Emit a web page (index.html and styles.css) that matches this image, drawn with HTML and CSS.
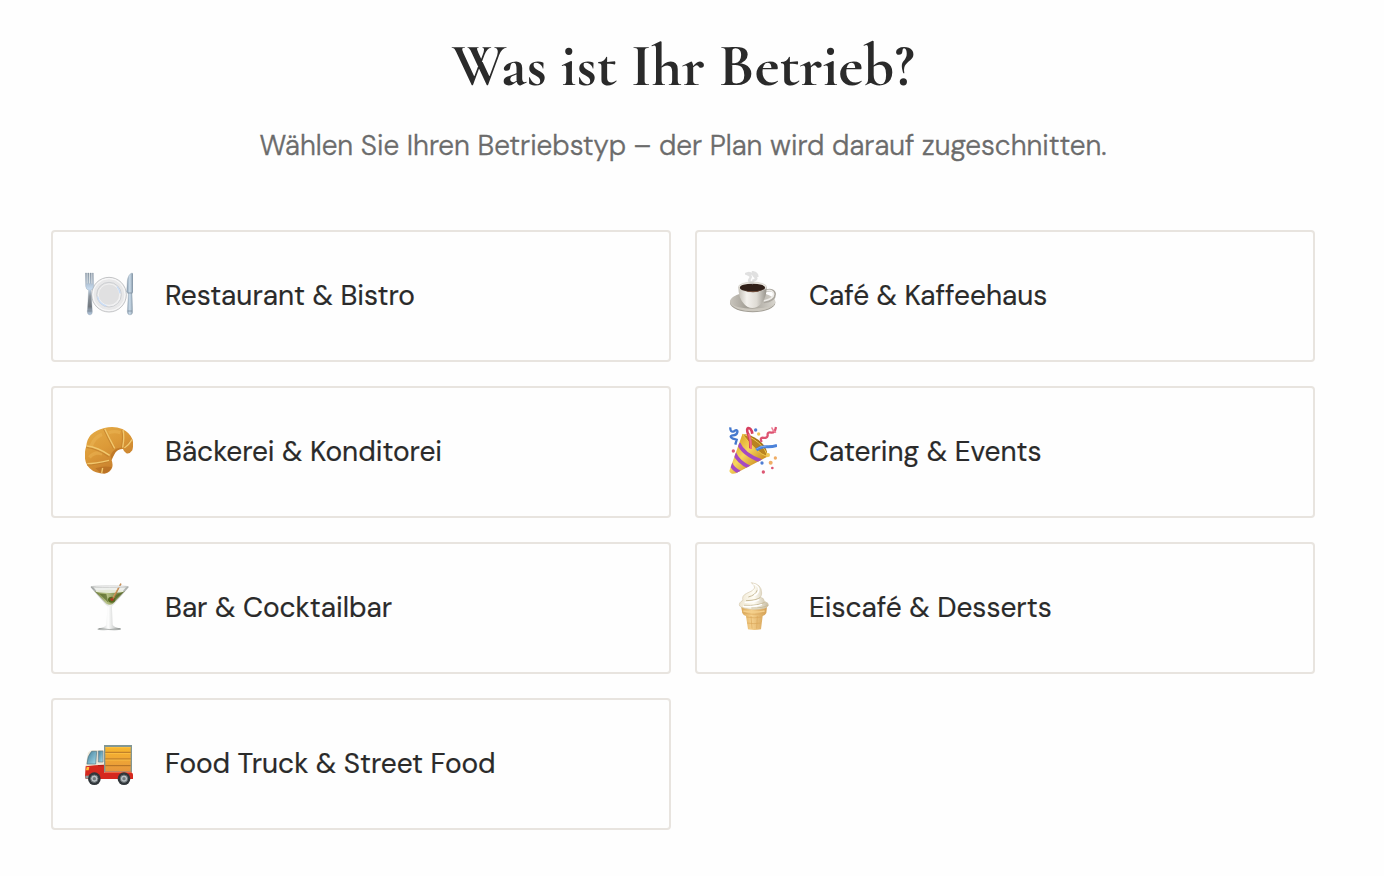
FILE: index.html
```html
<!DOCTYPE html>
<html lang="de">
<head>
    <meta charset="UTF-8">
    <meta name="viewport" content="width=device-width, initial-scale=1.0">
    <title>Was ist Ihr Betrieb?</title>
    <link rel="stylesheet" href="styles.css">
</head>
<body>
    <main class="step">
        <h1 class="title">Was ist Ihr Betrieb?</h1>
        <p class="subtitle">Wählen Sie Ihren Betriebstyp – der Plan wird darauf zugeschnitten.</p>

        <div class="options">
            <button class="option">
                <svg class="icon" viewBox="21 18 144 156">
                    <defs>
                        <linearGradient id="steel" x1="0" y1="0" x2="0" y2="1">
                            <stop offset="0" stop-color="#8d99a6"/>
                            <stop offset=".38" stop-color="#c4d9ee"/>
                            <stop offset=".55" stop-color="#8d949b"/>
                            <stop offset=".8" stop-color="#71777e"/>
                            <stop offset="1" stop-color="#b5cbe3"/>
                        </linearGradient>
                        <linearGradient id="blade" x1="0" x2="1">
                            <stop offset="0" stop-color="#8396a9"/>
                            <stop offset=".5" stop-color="#cbdcea"/>
                            <stop offset="1" stop-color="#8192a2"/>
                        </linearGradient>
                        <linearGradient id="plate" x1="0" y1="0" x2="1" y2="1">
                            <stop offset="0" stop-color="#dededf"/>
                            <stop offset="1" stop-color="#f5f5f6"/>
                        </linearGradient>
                    </defs>
                    <circle cx="93" cy="92" r="52" fill="#f0f0f1" stroke="#a9abae" stroke-width="2"/>
                    <circle cx="93" cy="92" r="48" fill="#e8e8e9" stroke="#fff" stroke-width="2"/>
                    <circle cx="93" cy="92" r="37" fill="url(#plate)" stroke="#cdcfd2" stroke-width="3"/>
                    <circle cx="93" cy="92" r="32" fill="#e0e0e1" stroke="#f7f7f8" stroke-width="2"/>
                    <path d="M59 98a35 35 0 0 0 26 28M117 68a34 34 0 0 1 9 20" fill="none" stroke="#c8dcf6" stroke-width="4"/>
                    <path d="M22 27h4v32h3V27h4v32h3V27h4v32h3V27h3l1 40q-1 9-8 12l4 65q0 8-7 9-8-1-8-9l4-65q-8-3-9-12z" fill="url(#steel)" stroke="#8a98a8" stroke-width="1"/>
                    <path d="M162 27q-11 3-14 23l-2 34 5 5-3 54q0 9 8 10 8-1 8-10l-2-54 3-4V29z" fill="url(#blade)" stroke="#8a9aab" stroke-width="1"/>
                    <path d="M149 87h13M28 141h13M149 141h13" stroke="#70808f" stroke-width="2"/>
                </svg>
                <span class="label">Restaurant &amp; Bistro</span>
            </button>

            <button class="option">
                <svg class="icon" viewBox="21 18 144 156">
                    <defs>
                        <linearGradient id="cup" x1="0" x2="1">
                            <stop offset="0" stop-color="#c3bfb6"/>
                            <stop offset=".3" stop-color="#f3f1ed"/>
                            <stop offset=".65" stop-color="#dedbd4"/>
                            <stop offset="1" stop-color="#96928a"/>
                        </linearGradient>
                        <linearGradient id="saucer" x1="0" x2="1">
                            <stop offset="0" stop-color="#c9c5bd"/>
                            <stop offset=".4" stop-color="#9f9b92"/>
                            <stop offset="1" stop-color="#d8d5ce"/>
                        </linearGradient>
                        <filter id="steam"><feGaussianBlur stdDeviation="1.5"/></filter>
                    </defs>
                    <ellipse cx="92" cy="116" rx="68" ry="29" fill="#a39f96"/>
                    <ellipse cx="92" cy="113" rx="68" ry="28" fill="url(#saucer)"/>
                    <path d="M26 118q16 24 66 24t66-24q-15 16-66 16t-66-16z" fill="#ccc8bf"/>
                    <path d="M129 81q27-8 29 9 0 20-33 24" fill="none" stroke="#aaa69e" stroke-width="8"/>
                    <path d="M130 81q23-6 25 9 0 15-30 21" fill="none" stroke="#eeece8" stroke-width="5"/>
                    <path d="M49 69q0 34 18 52 9 11 24 11t25-11q18-19 18-52z" fill="url(#cup)"/>
                    <ellipse cx="91.500" cy="69" rx="42.500" ry="15" fill="#e9e6e0" stroke="#bab6ae" stroke-width="1"/>
                    <ellipse cx="91.500" cy="71" rx="38" ry="12" fill="#302019"/>
                    <path d="M63 77q27 9 57 0-25 15-57 0z" fill="#704a37"/>
                    <path d="M94 58q-18-6-10-14t-10-15q10-4 15 3M91 51q17-5 9-12t-7-14q13 2 13 14" fill="none" stroke="#c4c4c4" stroke-width="8" opacity=".5" filter="url(#steam)"/>
                </svg>
                <span class="label">Café &amp; Kaffeehaus</span>
            </button>

            <button class="option">
                <svg class="icon" viewBox="21 18 144 156">
                    <defs>
                        <linearGradient id="crust" x1="0" y1="0" x2=".6" y2="1">
                            <stop offset="0" stop-color="#e5ad48"/>
                            <stop offset=".5" stop-color="#dc9a38"/>
                            <stop offset="1" stop-color="#c47b2b"/>
                        </linearGradient>
                    </defs>
                    <path d="M79 24q28-8 54 3 22 10 31 32 3 18-1 32-8 12-18 9-9-7-10-13-20-1-27 18-5 9-7 16 4 10 2 20-4 16-23 20-29 0-45-16-14-13-15-39 1-17 5-28 3-42 54-54z" fill="url(#crust)"/>
                    <path d="M101 118q-8-12 5-25 14-14 29-8-19 4-26 18zM52 145q22-8 49-4-7 17-25 19-13-3-24-15z" fill="#a85f1b" opacity=".45"/>
                    <path d="M39 79q10-27 33-36M92 38q18-6 35 0M34 112q18-19 39-10" fill="none" stroke="#edb959" stroke-width="10" opacity=".45"/>
                    <path d="M77 27q13 29 30 59M132 30q4 20-1 54M25 82q33 4 67 28M27 135q22 0 65-11M159 61q-9 16-22 24M68 159l3-15" fill="none" stroke="#bd7c2b" stroke-width="4" opacity=".6"/>
                    <path d="M80 26q14 29 30 59M135 30q5 20-1 53M27 78q33 4 68 28M28 131q22 0 65-10M162 59q-9 16-23 25M71 159l3-15" fill="none" stroke="#f1c86e" stroke-width="4"/>
                </svg>
                <span class="label">Bäckerei &amp; Konditorei</span>
            </button>

            <button class="option">
                <svg class="icon" viewBox="21 18 144 156">
                    <defs>
                        <linearGradient id="cone" x1="0" y1="0" x2="1" y2="1">
                            <stop offset=".1" stop-color="#d79b20"/>
                            <stop offset=".45" stop-color="#f7d75d"/>
                            <stop offset=".8" stop-color="#c9861d"/>
                        </linearGradient>
                        <clipPath id="coneShape"><path d="M61 43q20 9 43 34 23 23 32 33l-94 50q-16 5-20-7z"/></clipPath>
                    </defs>
                    <path d="M61 43q17-3 48 16 29 23 27 51L91 90z" fill="#a97518"/>
                    <path d="M61 43q20 9 43 34 23 23 32 33l-94 50q-16 5-20-7z" fill="url(#cone)"/>
                    <g clip-path="url(#coneShape)" fill="none" stroke="#a54ac2" stroke-width="11">
                        <path d="M50 70q12 32 67 53M37 99q11 27 46 43M26 130q5 16 29 28"/>
                    </g>
                    <path d="M61 43q20 3 48 25 24 21 27 42-16-5-36-24T61 43z" fill="#b98320" stroke="#f0cb50" stroke-width="3"/>
                    <path d="M85 85q2-22-6-41-7-17 0-20 9 0 12 17" fill="none" stroke="#d63e5e" stroke-width="8"/>
                    <path d="M87 87q1-23-6-46" fill="none" stroke="#ed7186" stroke-width="6"/>
                    <path d="M103 90q13-11 30-10t32-4" fill="none" stroke="#4b82d9" stroke-width="9"/>
                    <path d="M103 87q13-9 30-9" fill="none" stroke="#82adf0" stroke-width="3"/>
                    <path d="M25 22q-1 16 11 12 12-8 10 3-2 10-15 9-10 3 0 9l13 4-4 15" fill="none" stroke="#4478ce" stroke-width="7"/>
                    <path d="M162 21q-3 18-14 17-13-3-11 9-2 9-15 6-9 0-3 13" fill="none" stroke="#dd5371" stroke-width="7"/>
                    <path d="M149 22q2 9 13 16" fill="none" stroke="#ee8299" stroke-width="5"/>
                    <g fill="#4f7ed3"><circle cx="101" cy="30" r="5"/><circle cx="120" cy="129" r="5"/></g>
                    <g fill="#dc5773"><circle cx="34" cy="93" r="5"/><circle cx="124" cy="156" r="5"/><circle cx="151" cy="144" r="4"/></g>
                    <g fill="#f0c858"><circle cx="110" cy="42" r="5"/><circle cx="138" cy="105" r="6"/></g>
                    <g fill="#efad65"><circle cx="160" cy="114" r="5"/><circle cx="146" cy="128" r="6"/></g>
                </svg>
                <span class="label">Catering &amp; Events</span>
            </button>

            <button class="option">
                <svg class="icon" viewBox="21 18 144 156">
                    <defs>
                        <linearGradient id="glass" x1="0" x2="1">
                            <stop offset="0" stop-color="#9b9f9d"/>
                            <stop offset=".5" stop-color="#f1f2f1"/>
                            <stop offset="1" stop-color="#a4a8a5"/>
                        </linearGradient>
                        <linearGradient id="stem" x1="0" x2="1">
                            <stop offset="0" stop-color="#a6aaa8"/>
                            <stop offset=".45" stop-color="#fff"/>
                            <stop offset="1" stop-color="#9da19f"/>
                        </linearGradient>
                        <linearGradient id="drink" x1="0" x2="1">
                            <stop offset="0" stop-color="#65752c"/>
                            <stop offset=".4" stop-color="#b9c489"/>
                            <stop offset="1" stop-color="#526322"/>
                        </linearGradient>
                    </defs>
                    <path d="M87 82h16l-1 16 2 48q4 8 22 11 8 4-4 5-28 3-58 0-10-1-2-5 20-3 23-11l3-48z" fill="url(#stem)"/>
                    <path d="M39 31h112l1 3-46 53q-11 10-22 0L38 34z" fill="url(#glass)"/>
                    <path d="M46 34h98l-41 47q-8 8-16 0z" fill="#eef0ed"/>
                    <path d="M50 45h90l-34 37q-11 9-22 0z" fill="url(#drink)"/>
                    <ellipse cx="95" cy="46" rx="43" ry="5" fill="#e5e9d7"/>
                    <path d="M65 54h20l6 26zM112 57l17-5-20 22z" fill="#506321" opacity=".65"/>
                    <ellipse cx="101" cy="71" rx="11" ry="9" fill="#586a20"/>
                    <circle cx="102" cy="70" r="5" fill="#a83a22"/>
                    <path d="M105 68l24-45" stroke="#b97d46" stroke-width="4"/>
                    <path d="M105 64l23-41" stroke="#dfa866" stroke-width="2"/>
                    <ellipse cx="95" cy="32" rx="55" ry="2.500" fill="#f4f4f4" stroke="#b5b7b5" stroke-width="1.500"/>
                    <path d="M63 158q32 5 64 0" fill="none" stroke="#858987" stroke-width="2"/>
                </svg>
                <span class="label">Bar &amp; Cocktailbar</span>
            </button>

            <button class="option">
                <svg class="icon" viewBox="21 18 144 156">
                    <defs>
                        <linearGradient id="wafer" x1="0" x2="1">
                            <stop offset="0" stop-color="#d9a657"/>
                            <stop offset=".4" stop-color="#f5d08c"/>
                            <stop offset="1" stop-color="#d39f54"/>
                        </linearGradient>
                        <linearGradient id="cream" x1="0" x2="1">
                            <stop offset="0" stop-color="#eee5d0"/>
                            <stop offset=".5" stop-color="#fffdf4"/>
                            <stop offset="1" stop-color="#c6bba1"/>
                        </linearGradient>
                    </defs>
                    <path d="M57 91q40 12 78 0l-2 20q-4 7-11 9l-5 40q-21 4-39 0l-6-40q-8-2-11-9z" fill="url(#wafer)"/>
                    <path d="M61 110q37 10 71 0M73 123q24 5 46 0M75 141q21 4 42 0M87 120l3 38M106 120l-2 38" fill="none" stroke="#dba75b" stroke-width="2"/>
                    <path d="M64 105q32 6 64 0" fill="none" stroke="#f5d08c" stroke-width="4"/>
                    <path d="M88 20q31 4 31 31 0 8-4 13 12 2 12 12 14 4 12 13-7 11-42 11-36-1-44-10-4-10 10-17-5-13 11-21 20-7 24-16 1-8-10-16z" fill="url(#cream)" stroke="#d5c9ad" stroke-width="2"/>
                    <path d="M115 64q-10 9-43 10M128 79q-20 11-62 9M105 43q-4 14-26 20M138 88q-16 9-50 8" fill="none" stroke="#c8bb99" stroke-width="3"/>
                    <path d="M94 24q20 8 16 21-2 9-14 14M68 79q27 0 44-8M63 91q37 2 57-6" fill="none" stroke="#fff" stroke-width="4"/>
                </svg>
                <span class="label">Eiscafé &amp; Desserts</span>
            </button>

            <button class="option">
                <svg class="icon" viewBox="21 18 144 156">
                    <defs>
                        <linearGradient id="cargo" x1="0" y1="0" x2="0" y2="1">
                            <stop offset="0" stop-color="#f8b72d"/>
                            <stop offset="1" stop-color="#e6963c"/>
                        </linearGradient>
                        <linearGradient id="window" x1="0" y1="0" x2="1" y2="1">
                            <stop offset="0" stop-color="#427e9a"/>
                            <stop offset="1" stop-color="#a5dceb"/>
                        </linearGradient>
                    </defs>
                    <path d="M78 39h84v83H78z" fill="#829794"/>
                    <path d="M82 45h76v73H82z" fill="url(#cargo)"/>
                    <path d="M82 61h76M82 81h76M82 101h76" stroke="#ad6e27" stroke-width="3"/>
                    <path d="M82 47h76M82 64h76M82 84h76" stroke="#ffc84f" stroke-width="2"/>
                    <path d="M30 62q5-8 16-8h32v69H23V99z" fill="#eee8d9"/>
                    <path d="M41 58h15l-3 38H27q1-25 14-38z" fill="url(#window)" stroke="#547581" stroke-width="2"/>
                    <path d="M61 57h14v33H61z" fill="url(#window)" stroke="#69818a" stroke-width="2"/>
                    <path d="M23 103q29-5 55-5v25h84q3 0 3 6v12H24q-3-1-3-9z" fill="#d5281e"/>
                    <path d="M79 121h82" stroke="#f06442" stroke-width="4"/>
                    <path d="M60 101h16" stroke="#a91f19" stroke-width="3"/>
                    <path d="M26 105h8l-2 10h-8z" fill="#ffbd3b"/>
                    <path d="M22 131h12v9H22z" fill="#8f9c9d"/>
                    <g fill="#30363a"><circle cx="49" cy="140" r="19"/><circle cx="138" cy="140" r="19"/></g>
                    <g fill="#bbc1c4" stroke="#646d71" stroke-width="3"><circle cx="49" cy="140" r="11"/><circle cx="138" cy="140" r="11"/></g>
                    <g fill="#71797d"><circle cx="49" cy="140" r="5"/><circle cx="138" cy="140" r="5"/></g>
                </svg>
                <span class="label">Food Truck &amp; Street Food</span>
            </button>
        </div>
    </main>
</body>
</html>
```
FILE: styles.css
```css
body {
    margin: 0;
    background-color: #fefefe;
    color: #2a2a2a;
    font-family: "DM Sans", Inter, sans-serif;
}
.step {
    width: 1264px;
    margin-left: 51px;
    padding-top: 30px;
}
.title {
    margin: 0;
    font-family: "Cormorant Garamond", "Liberation Serif", serif;
    font-size: 60px;
    font-weight: 700;
    line-height: 72px;
    text-align: center;
}
.subtitle {
    margin: 24px 0 64px;
    color: #6b6b6b;
    font-size: 28px;
    font-weight: 300;
    line-height: 40px;
    text-align: center;
    -webkit-text-stroke: 0.4px #6b6b6b;
}
.options {
    display: grid;
    grid-template-columns: repeat(2, 1fr);
    gap: 24px;
}
.option {
    display: flex;
    align-items: center;
    gap: 32px;
    height: 132px;
    padding: 0 32px;
    border: 2px solid #e8e4df;
    border-radius: 4px;
    background-color: #fefefe;
    color: inherit;
    font-family: inherit;
    font-size: 28px;
    text-align: left;
    cursor: pointer;
}
.icon {
    width: 48px;
    height: 52px;
    flex: none;
}
.label {
    line-height: 40px;
    white-space: nowrap;
    -webkit-text-stroke: 0.2px #2a2a2a;
}
```
